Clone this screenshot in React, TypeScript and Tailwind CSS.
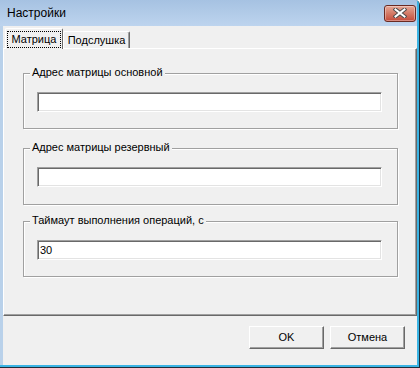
import React from "react";

const font = { fontFamily: '"Liberation Sans", Arial, sans-serif' };

function GroupBox({
  label,
  value,
  className,
  heightClass,
}: {
  label: string;
  value?: string;
  className: string;
  heightClass: string;
}) {
  return (
    <div
      className={`relative ml-[19px] w-[375px] ${heightClass} ${className} border border-[#a0a0a0] shadow-[inset_1px_1px_0_#ffffff,1px_1px_0_#ffffff]`}
    >
      <span className="absolute left-[6px] top-[-8px] bg-[#f0f0f0] px-[2px] text-[11px] leading-[13px] text-black whitespace-nowrap">
        {label}
      </span>
      <div className="mt-[18px] ml-[13px] w-[345px] h-[20px] bg-white border border-t-[#a0a0a0] border-l-[#a0a0a0] border-r-white border-b-white shadow-[inset_1px_1px_0_#696969,inset_-1px_-1px_0_#e3e3e3] flex items-center pl-[2px] pt-[1px] text-[11px] leading-[13px] text-black">
        {value}
      </div>
    </div>
  );
}

function Button({ children }: { children: React.ReactNode }) {
  return (
    <div className="w-[75px] h-[23px] flex items-center justify-center bg-[#f0f0f0] border border-t-white border-l-white border-r-[#696969] border-b-[#696969] shadow-[inset_-1px_-1px_0_#a0a0a0] text-[11px] leading-[13px] text-black">
      {children}
    </div>
  );
}

export default function App() {
  return (
    <div className="w-[420px] h-[368px] bg-[#1f2d3a] pr-px pb-px rounded-tr-[5px] overflow-hidden" style={font}>
      <div className="w-full h-full bg-[#3ab4e4] pr-[2px] pb-[2px] rounded-tr-[4px]">
        <div className="w-full h-full flex flex-col bg-[#b9d1ea] rounded-tr-[3px]">
          {/* Title bar */}
          <div className="h-[26px] shrink-0 flex items-center justify-between pl-[7px] pr-px bg-gradient-to-b from-[#a6c2e2] to-[#bdd4ee]">
            <span className="text-[12px] leading-[14px] text-black">Настройки</span>
            <div className="w-[32px] h-[17px] rounded-[3px] border border-[#6a2a22] bg-gradient-to-b from-[#e6a797] via-[#d37a66] to-[#c4493a] flex items-center justify-center shadow-[inset_0_0_0_1px_rgba(255,255,255,0.35)]">
              <svg width="14" height="10" viewBox="0 0 14 10">
                <path d="M2.5 1.5 L11.5 8.5 M11.5 1.5 L2.5 8.5" stroke="#4a4a4a" strokeWidth="4" strokeLinecap="square" />
                <path d="M2.5 1.5 L11.5 8.5 M11.5 1.5 L2.5 8.5" stroke="#ffffff" strokeWidth="2" strokeLinecap="square" />
              </svg>
            </div>
          </div>

          {/* Client area */}
          <div className="flex-1 ml-[3px] bg-[#f0f0f0] flex flex-col">
            {/* Tabs */}
            <div className="h-[22px] shrink-0 flex items-end pl-[2px]">
              <div className="relative z-10 -mb-px w-[58px] h-[21px] bg-[#f0f0f0] border-t border-l border-t-white border-l-white border-r border-r-[#696969] rounded-t-[2px] flex items-start justify-center pt-[2px] pl-[1px] pr-[1px]">
                <div className="w-full h-[17px] border border-dotted border-black flex items-center justify-center text-[11px] leading-[13px] text-black">
                  Матрица
                </div>
              </div>
              <div className="w-[67px] h-[17px] bg-[#f0f0f0] border-t border-l border-t-white border-l-white border-r border-r-[#696969] shadow-[inset_-1px_0_0_#a0a0a0] rounded-t-[2px] flex items-center justify-center text-[11px] leading-[13px] text-black">
                Подслушка
              </div>
            </div>

            {/* Tab pane */}
            <div className="h-[268px] shrink-0 border-t border-l border-t-white border-l-white border-r border-b border-r-[#696969] border-b-[#696969] shadow-[inset_-1px_-1px_0_#a0a0a0] flex flex-col">
              <GroupBox label="Адрес матрицы основной" className="mt-[24px]" heightClass="h-[56px]" />
              <GroupBox label="Адрес матрицы резервный" className="mt-[19px]" heightClass="h-[57px]" />
              <GroupBox label="Таймаут выполнения операций, с" value="30" className="mt-[16px]" heightClass="h-[56px]" />
            </div>

            {/* Footer */}
            <div className="flex justify-end gap-[6px] pt-[10px] pr-[12px]">
              <Button>OK</Button>
              <Button>Отмена</Button>
            </div>
          </div>
        </div>
      </div>
    </div>
  );
}
